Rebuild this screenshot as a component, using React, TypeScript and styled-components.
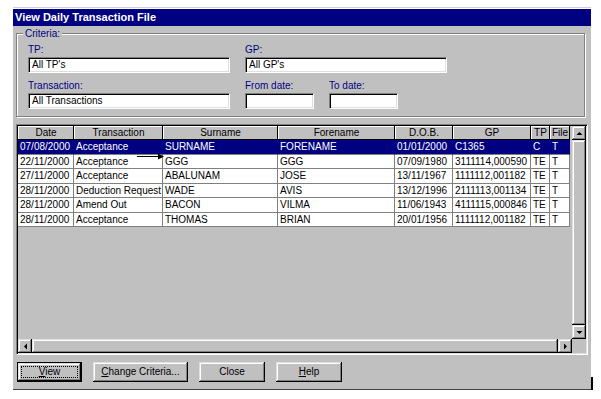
import styled, { createGlobalStyle, css } from 'styled-components';

type Column = { title: string; width: number };

const COLUMNS: Column[] = [
  { title: 'Date', width: 56 },
  { title: 'Transaction', width: 89 },
  { title: 'Surname', width: 115 },
  { title: 'Forename', width: 117 },
  { title: 'D.O.B.', width: 58 },
  { title: 'GP', width: 78 },
  { title: 'TP', width: 19 },
  { title: 'File', width: 20 },
];

const ROWS: string[][] = [
  ['07/08/2000', 'Acceptance', 'SURNAME', 'FORENAME', '01/01/2000', 'C1365', 'C', 'T'],
  ['22/11/2000', 'Acceptance', 'GGG', 'GGG', '07/09/1980', '3111114,000590', 'TE', 'T'],
  ['27/11/2000', 'Acceptance', 'ABALUNAM', 'JOSE', '13/11/1967', '1111112,001182', 'TE', 'T'],
  ['28/11/2000', 'Deduction Request', 'WADE', 'AVIS', '13/12/1996', '2111113,001134', 'TE', 'T'],
  ['28/11/2000', 'Amend Out', 'BACON', 'VILMA', '11/06/1943', '4111115,000846', 'TE', 'T'],
  ['28/11/2000', 'Acceptance', 'THOMAS', 'BRIAN', '20/01/1956', '1111112,001182', 'TE', 'T'],
];

const SELECTED_ROW = 0;

const Arrow = ({ dir }: { dir: 'up' | 'down' | 'left' | 'right' }) => {
  const points = {
    up: '0.5,4 3.5,1 6.5,4',
    down: '0.5,1 3.5,4 6.5,1',
    left: '4,0.5 1,3.5 4,6.5',
    right: '1,0.5 4,3.5 1,6.5',
  }[dir];
  const vertical = dir === 'up' || dir === 'down';
  return (
    <svg width={vertical ? 7 : 5} height={vertical ? 5 : 7}>
      <polygon points={points} fill="#000" />
    </svg>
  );
};

const App = () => {
  return (
    <Page>
      <GlobalStyle />
      <Window>
        <TitleBar>View Daily Transaction File</TitleBar>
        <Body>
          <Criteria>
            <Legend>Criteria:</Legend>
            <FieldRow>
              <Field>
                <Label>TP:</Label>
                <Input $width={202}>All TP's</Input>
              </Field>
              <Field>
                <Label>GP:</Label>
                <Input $width={202}>All GP's</Input>
              </Field>
            </FieldRow>
            <FieldRow>
              <Field>
                <Label>Transaction:</Label>
                <Input $width={202}>All Transactions</Input>
              </Field>
              <Field>
                <Label>From date:</Label>
                <Input $width={69} />
              </Field>
              <Field>
                <Label>To date:</Label>
                <Input $width={69} />
              </Field>
            </FieldRow>
          </Criteria>

          <ListView>
            <Table>
              {COLUMNS.map((col) => (
                <HeaderCell key={col.title}>{col.title}</HeaderCell>
              ))}
              {ROWS.map((row, r) =>
                row.map((value, c) => (
                  <Cell key={`${r}-${c}`} $selected={r === SELECTED_ROW}>
                    {value}
                  </Cell>
                ))
              )}
              <Pointer width="28" height="7">
                <line x1="0" y1="3.5" x2="22" y2="3.5" stroke="#000" strokeWidth="1" />
                <polygon points="21,0.5 27,3.5 21,6.5" fill="#000" />
              </Pointer>
            </Table>

            <ScrollBar>
              <ScrollButton>
                <Arrow dir="up" />
              </ScrollButton>
              <Thumb />
              <ScrollButton>
                <Arrow dir="down" />
              </ScrollButton>
            </ScrollBar>

            <ScrollBar $horizontal>
              <ScrollButton>
                <Arrow dir="left" />
              </ScrollButton>
              <Thumb />
              <ScrollButton>
                <Arrow dir="right" />
              </ScrollButton>
            </ScrollBar>
            <Corner />
          </ListView>

          <ButtonRow>
            <Button $width={65} $default>
              <Focus>
                <u>V</u>iew
              </Focus>
            </Button>
            <Button $width={95}>
              <u>C</u>hange Criteria...
            </Button>
            <Button $width={66}>Close</Button>
            <Button $width={66}>
              <u>H</u>elp
            </Button>
          </ButtonRow>
        </Body>
      </Window>
    </Page>
  );
};

export default App;

const GlobalStyle = createGlobalStyle`
  body {
    margin: 0;
    background: #fff;
    font-family: "Liberation Sans", Arial, sans-serif;
  }
`;

const raised = css`
  background: #c0c0c0;
  box-shadow: inset -1px -1px 0 #000, inset 1px 1px 0 #dfdfdf,
    inset -2px -2px 0 #808080, inset 2px 2px 0 #fff;
`;

const Page = styled.div`
  padding: 7px 0 0 13px;
`;

const Window = styled.div`
  position: relative;
  width: 578px;
  box-sizing: border-box;
  background: #c0c0c0;
  border-top: 1px solid #cfcfcf;
  border-bottom: 1px solid #404040;

  &::after {
    content: '';
    position: absolute;
    right: -2px;
    bottom: -1px;
    width: 2px;
    height: 13px;
    background: #000;
  }
`;

const TitleBar = styled.div`
  height: 17px;
  border-top: 1px solid #fff;
  background: #000080;
  color: #fff;
  font-size: 11px;
  font-weight: bold;
  line-height: 17px;
  padding-left: 2px;
`;

const Body = styled.div`
  padding: 0 0 7px 3px;
`;

const Criteria = styled.fieldset`
  margin: 1px 0 0;
  width: 569px;
  box-sizing: border-box;
  padding: 2px 4px 7px 4px;
  border: 1px solid #808080;
  box-shadow: inset 1px 1px 0 #fff, 1px 1px 0 #fff;
  min-inline-size: 0;
`;

const Legend = styled.legend`
  margin-left: 2px;
  padding: 0 2px;
  background: #c0c0c0;
  color: #000080;
  font-size: 10px;
  line-height: 13px;
`;

const FieldRow = styled.div`
  display: flex;
  gap: 15px;
  padding-left: 7px;

  & + & {
    margin-top: 5px;
  }
`;

const Field = styled.div`
  display: flex;
  flex-direction: column;
`;

const Label = styled.span`
  color: #000080;
  font-size: 10px;
  line-height: 15px;
`;

const Input = styled.div<{ $width: number }>`
  width: ${(p) => p.$width}px;
  height: 16px;
  box-sizing: border-box;
  background: #fff;
  border: 1px solid;
  border-color: #808080 #fff #fff #808080;
  box-shadow: inset 1px 1px 0 #000, inset -1px -1px 0 #dfdfdf;
  padding-left: 3px;
  font-size: 10px;
  line-height: 14px;
  color: #000;
  white-space: nowrap;
`;

const ListView = styled.div`
  margin-top: 7px;
  width: 572px;
  height: 231px;
  box-sizing: border-box;
  border: 1px solid;
  border-color: #808080 #fff #fff #808080;
  box-shadow: inset 1px 1px 0 #000, inset -1px -1px 0 #dfdfdf;
  padding: 1px;
  display: grid;
  grid-template-columns: 554px 14px;
  grid-template-rows: 213px 14px;
  background: #c0c0c0;
`;

const Table = styled.div`
  position: relative;
  display: grid;
  grid-template-columns: ${COLUMNS.map((c) => `${c.width}px`).join(' ')};
  grid-template-rows: 14px;
  grid-auto-rows: 14.5px;
  align-content: start;
  overflow: hidden;
`;

const HeaderCell = styled.div`
  background: #c0c0c0;
  box-shadow: inset -1px -1px 0 #000, inset 1px 1px 0 #fff;
  font-size: 10px;
  line-height: 14px;
  text-align: center;
  color: #000;
  white-space: nowrap;
  overflow: hidden;
`;

const Cell = styled.div<{ $selected?: boolean }>`
  box-sizing: border-box;
  padding-left: 2px;
  border-right: 1px solid ${(p) => (p.$selected ? '#000080' : '#808080')};
  border-bottom: 1px solid #808080;
  background: ${(p) => (p.$selected ? '#000080' : '#fff')};
  color: ${(p) => (p.$selected ? '#fff' : '#000')};
  font-size: 10px;
  line-height: 13.5px;
  white-space: nowrap;
  overflow: hidden;
`;

const Pointer = styled.svg`
  position: absolute;
  left: 119px;
  top: 27px;
`;

const ScrollBar = styled.div<{ $horizontal?: boolean }>`
  display: flex;
  flex-direction: ${(p) => (p.$horizontal ? 'row' : 'column')};
  background: #e0e0e0;
`;

const ScrollButton = styled.div`
  ${raised};
  flex: none;
  width: 14px;
  height: 14px;
  display: flex;
  align-items: center;
  justify-content: center;
`;

const Thumb = styled.div`
  ${raised};
  flex: 1;
`;

const Corner = styled.div`
  background: #c0c0c0;
`;

const ButtonRow = styled.div`
  display: flex;
  gap: 11px;
  margin: 7px 0 0 1px;
`;

const Button = styled.button<{ $width: number; $default?: boolean }>`
  ${raised};
  width: ${(p) => p.$width}px;
  height: 20px;
  padding: 0;
  border: ${(p) => (p.$default ? '1px solid #000' : 'none')};
  font-family: "Liberation Sans", Arial, sans-serif;
  font-size: 10px;
  color: #000;
  display: flex;
  align-items: stretch;
  justify-content: center;
  line-height: 20px;
`;

const Focus = styled.span`
  flex: 1;
  margin: 3px;
  border: 1px dotted #000;
  line-height: 10px;
  display: flex;
  align-items: center;
  justify-content: center;
`;
